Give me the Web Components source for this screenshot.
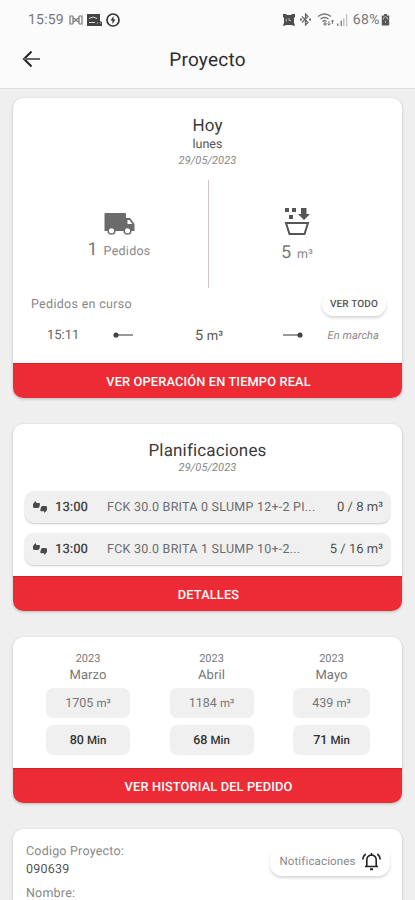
<!DOCTYPE html>
<html lang="es">
<head>
<meta charset="utf-8">
<meta name="viewport" content="width=device-width, initial-scale=1">
<title>Proyecto</title>
<style>
    html, body {
        margin: 0;
        height: 900px;
        overflow: hidden;
        background: #efefef;
        font-family: Roboto, "Liberation Sans", sans-serif;
        text-rendering: geometricPrecision;
        color: #333;
    }
</style>
</head>
<body>
<project-screen></project-screen>

<script>
class StatusBar extends HTMLElement {
    constructor() {
        super();
        this.attachShadow({ mode: 'open' });
    }

    connectedCallback() {
        this.shadowRoot.innerHTML = `
        <style>
            :host {
                display: flex;
                justify-content: space-between;
                height: 39px;
                padding: 0 25px 0 28px;
                box-sizing: border-box;
                align-items: center;
                font-size: 14px;
                color: #777;
            }
            div { display: flex; align-items: center; }
            svg { display: block; }
            .clock { width: 36px; margin-right: 5px; letter-spacing: 0.2px; }
            .battery { margin-left: 5px; letter-spacing: 0.4px; }
        </style>
        <div>
            <span class="clock">15:59</span>
            <svg width="14" height="12" viewBox="0 0 14 12" fill="none" stroke="#777" stroke-width="1.2">
                <path d="M4 2H1v8h3M10 2h3v8h-3M4 2v8M10 2v8M4 4l3 1.500L10 4M4 8l3-1.500L10 8"/>
            </svg>
            <svg width="16" height="12" viewBox="0 0 16 12" style="margin-left:4px">
                <path d="M0 0h13v7l2 1v4H0z" fill="#444"/>
                <path d="M2 4.500q4-3 8 0M2 8.500h6M10 9h1M13 9h1" stroke="#ddd" fill="none"/>
            </svg>
            <svg width="14" height="14" viewBox="0 0 14 14" style="margin-left:3px">
                <circle cx="7" cy="7" r="6" fill="none" stroke="#333" stroke-width="1.700"/>
                <path d="M7.500 3 4.500 7.500h2L6.300 11l3.200-4.500h-2z" fill="#333"/>
            </svg>
        </div>
        <div>
            <svg width="12" height="12" viewBox="0 0 12 12">
                <path d="M0 0h3l1 1h4l1-1h3v3l-1 1v5l1 2-1 1-2-1H3l-2 1-1-1 1-2V4L0 3z" fill="#4d4d4d"/>
                <path d="M6 4v2.500h2M3.500 4.500q-1 1.700 0 3.400" stroke="#ccc" fill="none" stroke-width="0.800"/>
            </svg>
            <svg width="11" height="13" viewBox="0 0 11 13" fill="none" stroke="#666" stroke-width="1.200" style="margin-left:5px">
                <path d="M2 3.500l6 6L5.500 12V1L8 3.500l-6 6"/>
                <path d="M0 6.500h2M9 6.500h2" stroke-width="2"/>
            </svg>
            <svg width="17" height="13" viewBox="0 0 17 13" fill="none" stroke="#777" stroke-width="1.500" style="margin-left:6px">
                <path d="M1 3.500q6.500-5 13 0M3.500 6q4-3 8 0M5.500 8.500q2-1.500 4 0"/>
                <path d="M7 10h2v2H7zM12 8v4M10.500 10.500l1.500 1.700 1.500-1.700M15.500 11V7M14.200 8.500l1.300-1.500 1.300 1.500" stroke-width="1"/>
            </svg>
            <svg width="12" height="12" viewBox="0 0 12 12" style="margin-left:2px">
                <path d="M1 9.500h1.500V12H1zM4.500 6.500H6V12H4.500z" fill="#888"/>
                <path d="M7 4h1.500v8H7zM10 0h1.300v12H10z" fill="#c2c2c2"/>
            </svg>
            <span class="battery">68%</span>
            <svg width="9" height="12" viewBox="0 0 9 13" style="margin-left:1px">
                <path d="M3 0h3v1.500h2.500v11h-8v-11H3z" fill="#555"/>
                <path d="M2 6q0-3 2.500-3T7 6" stroke="#ccc" fill="none"/>
                <path d="M4.500 7.500v2" stroke="#ccc"/>
            </svg>
        </div>
        `;
    }
}
customElements.define('status-bar', StatusBar);

class NavHeader extends HTMLElement {
    constructor() {
        super();
        this.attachShadow({ mode: 'open' });
    }

    connectedCallback() {
        this.shadowRoot.innerHTML = `
        <style>
            :host {
                display: grid;
                grid-template-columns: 62px 1fr 62px;
                align-items: center;
                height: 41px;
                margin-bottom: 8px;
            }
            svg { margin: 0 0 2px 22px; display: block; }
            h1 {
                margin: 0;
                font-size: 19px;
                font-weight: 400;
                text-align: center;
                color: #2d2d2d;
                letter-spacing: 0.25px;
            }
        </style>
        <svg width="18" height="18" viewBox="0 0 18 18" fill="none" stroke="#222" stroke-width="2">
            <path d="M9.500 1.500 2 9l7.500 7.500"/><path d="M2 9h16" stroke="#666"/>
        </svg>
        <h1><slot></slot></h1>
        `;
    }
}
customElements.define('nav-header', NavHeader);

// White rounded card, with a red action bar when "action" is set
class ActionCard extends HTMLElement {
    constructor() {
        super();
        this.attachShadow({ mode: 'open' });
    }

    connectedCallback() {
        const action = this.getAttribute('action');
        this.shadowRoot.innerHTML = `
        <style>
            :host {
                display: flex;
                flex: none;
                flex-direction: column;
                box-sizing: border-box;
                background: #fff;
                border-radius: 10px;
                overflow: hidden;
                box-shadow: 0 1px 3px rgba(0,0,0,0.24);
            }
            .content { flex: 1; min-height: 0; }
            button {
                display: block;
                width: 100%;
                height: 35px;
                border: 0;
                padding: 3px 0 0 2px;
                background: #ed2b35;
                box-shadow: inset 0 1px 0 #d9202b;
                color: #fff;
                font: 500 12.800px Roboto, "Liberation Sans", sans-serif;
                text-rendering: inherit;
                letter-spacing: 0.15px;
            }
        </style>
        <div class="content"><slot></slot></div>
        ${action ? `<button>${action}</button>` : ''}
        `;
    }
}
customElements.define('action-card', ActionCard);

class CardHeading extends HTMLElement {
    constructor() {
        super();
        this.attachShadow({ mode: 'open' });
    }

    connectedCallback() {
        const day = this.getAttribute('day');
        this.shadowRoot.innerHTML = `
        <style>
            :host { display: block; text-align: center; }
            h2 { margin: 0; font-size: 17px; line-height: 20px; font-weight: 400; color: #3a3a3a; letter-spacing: 0.15px; }
            .day { font-size: 12.500px; line-height: 18px; color: #555; }
            .date { font-size: 11px; line-height: 14px; font-style: italic; color: #888; letter-spacing: 0.1px; }
        </style>
        <h2><slot></slot></h2>
        ${day ? `<div class="day">${day}</div>` : ''}
        <div class="date">${this.getAttribute('date')}</div>
        `;
    }
}
customElements.define('card-heading', CardHeading);

class DayTotal extends HTMLElement {
    constructor() {
        super();
        this.attachShadow({ mode: 'open' });
    }

    connectedCallback() {
        this.shadowRoot.innerHTML = `
        <style>
            :host { display: flex; flex-direction: column; align-items: center; color: #777; }
            .icon { height: 32px; display: flex; align-items: flex-end; }
            .value { display: flex; align-items: baseline; gap: 6px; font-size: 18px; line-height: 24px; margin-top: var(--value-gap, 2px); }
            .unit { font-size: 12.500px; letter-spacing: 0.25px; color: #888; }
        </style>
        <div class="icon"><slot></slot></div>
        <div class="value"><span>${this.getAttribute('value')}</span><span class="unit">${this.getAttribute('unit')}</span></div>
        `;
    }
}
customElements.define('day-total', DayTotal);

class PillButton extends HTMLElement {
    constructor() {
        super();
        this.attachShadow({ mode: 'open' });
    }

    connectedCallback() {
        this.shadowRoot.innerHTML = `
        <style>
            :host {
                display: flex;
                align-items: center;
                justify-content: center;
                box-sizing: border-box;
                background: #fff;
                border-radius: 12px;
                box-shadow: 0 2px 3px rgba(0,0,0,0.16);
            }
        </style>
        <slot></slot>
        `;
    }
}
customElements.define('pill-button', PillButton);

class PlanRow extends HTMLElement {
    constructor() {
        super();
        this.attachShadow({ mode: 'open' });
    }

    connectedCallback() {
        this.shadowRoot.innerHTML = `
        <style>
            :host {
                display: flex;
                align-items: center;
                height: 32px;
                box-sizing: border-box;
                padding: 0 7px 0 8px;
                background: #f0f0f0;
                border-radius: 9px;
                box-shadow: 0 1px 2px rgba(0,0,0,0.22);
                font-size: 13px;
            }
            svg { flex: none; margin-bottom: 1px; }
            .time { width: 52px; margin-left: 8px; color: #444; font-weight: 500; }
            .mix { flex: 1; color: #6c6c6c; font-size: 12.500px; letter-spacing: 0.24px; white-space: nowrap; }
            .amount { color: #505050; letter-spacing: 0.02px; }
        </style>
        <svg width="14" height="12" viewBox="0 0 14 12" fill="#4a4a4a">
            <path d="M0 3 2.500 0 3.500 2H6.500l.5 1-.8 3.500L4.500 7H2L0 6.500z"/>
            <path d="M14 9l-2.500 3-.5-1.800H7.900l-.7-1 1-3.500 1-.7H12l2 .5z"/>
        </svg>
        <span class="time">${this.getAttribute('time')}</span>
        <span class="mix"><slot></slot></span>
        <span class="amount">${this.getAttribute('amount')}</span>
        `;
    }
}
customElements.define('plan-row', PlanRow);

class MonthStats extends HTMLElement {
    constructor() {
        super();
        this.attachShadow({ mode: 'open' });
    }

    connectedCallback() {
        this.shadowRoot.innerHTML = `
        <style>
            :host { display: block; text-align: center; color: #777; }
            .year { font-size: 11px; line-height: 14px; }
            .month { font-size: 13px; line-height: 19px; margin-bottom: 3px; letter-spacing: 0.1px; }
            .box { height: 30px; line-height: 30px; border-radius: 7px; background: #f0f0f0; font-size: 12.500px; }
            .box + .box { margin-top: 7px; color: #333; font-weight: 500; }
            small { font-size: 11.500px; }
        </style>
        <div class="year">${this.getAttribute('year')}</div>
        <div class="month"><slot></slot></div>
        <div class="box">${this.getAttribute('volume')} <small>m³</small></div>
        <div class="box">${this.getAttribute('minutes')} <small>Min</small></div>
        `;
    }
}
customElements.define('month-stats', MonthStats);

class ProjectScreen extends HTMLElement {
    constructor() {
        super();
        this.attachShadow({ mode: 'open' });
    }

    connectedCallback() {
        this.shadowRoot.innerHTML = `
        <style>
            :host { display: block; height: 900px; overflow: hidden; }
            header { background: #fbfbfb; height: 88px; border-bottom: 1px solid #dedede; }
            main { display: flex; flex-direction: column; gap: 26px; height: 811px; box-sizing: border-box; overflow: hidden; padding: 9px 13px 0; }
            .today { height: 300px; }
            .today card-heading { padding-top: 18px; }
            .totals { display: grid; grid-template-columns: 195px 1px 1fr; height: 108px; margin-top: 12px; }
            .totals i { background: #d0c3c5; }
            .totals day-total { padding-top: 24px; }
            .totals day-total:first-child { padding-left: 17px; }
            .totals day-total:last-child { --value-gap: 5px; padding: 24px 17px 0 0; }
            .ongoing { display: flex; justify-content: space-between; align-items: center; height: 24px; margin: 4px 18px 0; }
            .ongoing span { font-size: 12.500px; color: #888; letter-spacing: 0.3px; }
            .ongoing pill-button { width: 64px; height: 23px; margin-right: -2px; font-size: 10px; font-weight: 500; color: #555; letter-spacing: 0.15px; }
            .trip { display: grid; grid-template-columns: 34px 84px 88px 79px 47px; align-items: center; margin: 7px 0 0 34px; height: 24px; }
            .trip svg { justify-self: center; }
            .trip .hour { font-size: 13px; color: #666; }
            .trip .load { font-size: 14.500px; color: #555; text-align: center; }
            .trip small { font-size: 13px; }
            .trip .state { justify-self: end; font-size: 11px; font-style: italic; color: #888; white-space: nowrap; letter-spacing: 0.1px; }
            .plans { height: 187px; }
            .plans card-heading { padding: 17px 0 14px; }
            .rows { display: grid; gap: 10px; margin: 2px 12px 0; }
            .history { height: 166px; }
            .months { display: grid; grid-template-columns: 84px 84px 77px; column-gap: 39.500px; padding: 15px 0 0 33px; }
            .details { height: 120px; }
            .info { display: flex; justify-content: space-between; padding: 14px 12px 0 13px; }
            dl { margin: 0; font-size: 12.500px; line-height: 17.500px; letter-spacing: 0.2px; color: #888; }
            dd { margin: 0 0 7px; color: #555; }
            .info pill-button { width: 120px; height: 30px; margin-top: 3px; gap: 6px; font-size: 11.500px; color: #888; letter-spacing: 0.15px; }
        </style>
        <header>
            <status-bar></status-bar>
            <nav-header>Proyecto</nav-header>
        </header>
        <main>
            <action-card class="today" action="VER OPERACIÓN EN TIEMPO REAL">
                <card-heading day="lunes" date="29/05/2023">Hoy</card-heading>
                <div class="totals">
                    <day-total value="1" unit="Pedidos">
                        <svg width="31" height="24" viewBox="0 0 31 24">
                            <path d="M1.500 1H21q1 0 1 1v4h4l4.500 6v7H.500V2Q.500 1 1.500 1z" fill="#6b6b6b"/>
                            <path d="M23.500 8h2l2.800 4h-4.800z" fill="#fff"/>
                            <g fill="#fff" stroke="#6b6b6b" stroke-width="1.500">
                                <circle cx="7.500" cy="18.700" r="3.300"/><circle cx="23.500" cy="18.700" r="3.300"/>
                            </g>
                        </svg>
                    </day-total>
                    <i></i>
                    <day-total value="5" unit="m³">
                        <svg width="26" height="29" viewBox="0 0 26 29" fill="#555">
                            <path d="M1 1h4v4H1zM8 1h4v4H8zM5 8h4v4H5z"/>
                            <path d="M17 1h5.500v6H26l-6 6-6-6h3z"/>
                            <path d="M2 16h22l-3.500 11h-15z" fill="none" stroke="#555" stroke-width="2"/>
                        </svg>
                    </day-total>
                </div>
                <div class="ongoing">
                    <span>Pedidos en curso</span>
                    <pill-button>VER TODO</pill-button>
                </div>
                <div class="trip">
                    <span class="hour">15:11</span>
                    <svg width="20" height="7" viewBox="0 0 20 7"><path d="M3 3h17" stroke="#999" stroke-width="2"/><circle cx="3" cy="3" r="2.600" fill="#444"/></svg>
                    <span class="load">5 <small>m³</small></span>
                    <svg width="20" height="7" viewBox="0 0 20 7"><path d="M0 3h17" stroke="#999" stroke-width="2"/><circle cx="17" cy="3" r="2.600" fill="#444"/></svg>
                    <span class="state">En marcha</span>
                </div>
            </action-card>

            <action-card class="plans" action="DETALLES">
                <card-heading date="29/05/2023">Planificaciones</card-heading>
                <div class="rows">
                    <plan-row time="13:00" amount="0 / 8 m³">FCK 30.0 BRITA 0 SLUMP 12+-2 PI...</plan-row>
                    <plan-row time="13:00" amount="5 / 16 m³">FCK 30.0 BRITA 1 SLUMP 10+-2...</plan-row>
                </div>
            </action-card>

            <action-card class="history" action="VER HISTORIAL DEL PEDIDO">
                <div class="months">
                    <month-stats year="2023" volume="1705" minutes="80">Marzo</month-stats>
                    <month-stats year="2023" volume="1184" minutes="68">Abril</month-stats>
                    <month-stats year="2023" volume="439" minutes="71">Mayo</month-stats>
                </div>
            </action-card>

            <action-card class="details">
                <div class="info">
                    <dl>
                        <dt>Codigo Proyecto:</dt>
                        <dd>090639</dd>
                        <dt>Nombre:</dt>
                    </dl>
                    <pill-button>Notificaciones
                        <svg width="19" height="19" viewBox="0 0 19 19" fill="none" stroke="#222" stroke-width="1.600">
                            <path d="M3 14.500h13M4.800 14.500V8q0-4.500 4.700-5 4.700.5 4.700 5v6.500M9.500 3V1"/>
                            <path d="M3.700 2Q1 4 .800 7.500M15.300 2Q18 4 18.200 7.500"/>
                            <path d="M8 17.200h3" stroke-width="2"/>
                        </svg>
                    </pill-button>
                </div>
            </action-card>
        </main>
        `;
    }
}
customElements.define('project-screen', ProjectScreen);
</script>
</body>
</html>
